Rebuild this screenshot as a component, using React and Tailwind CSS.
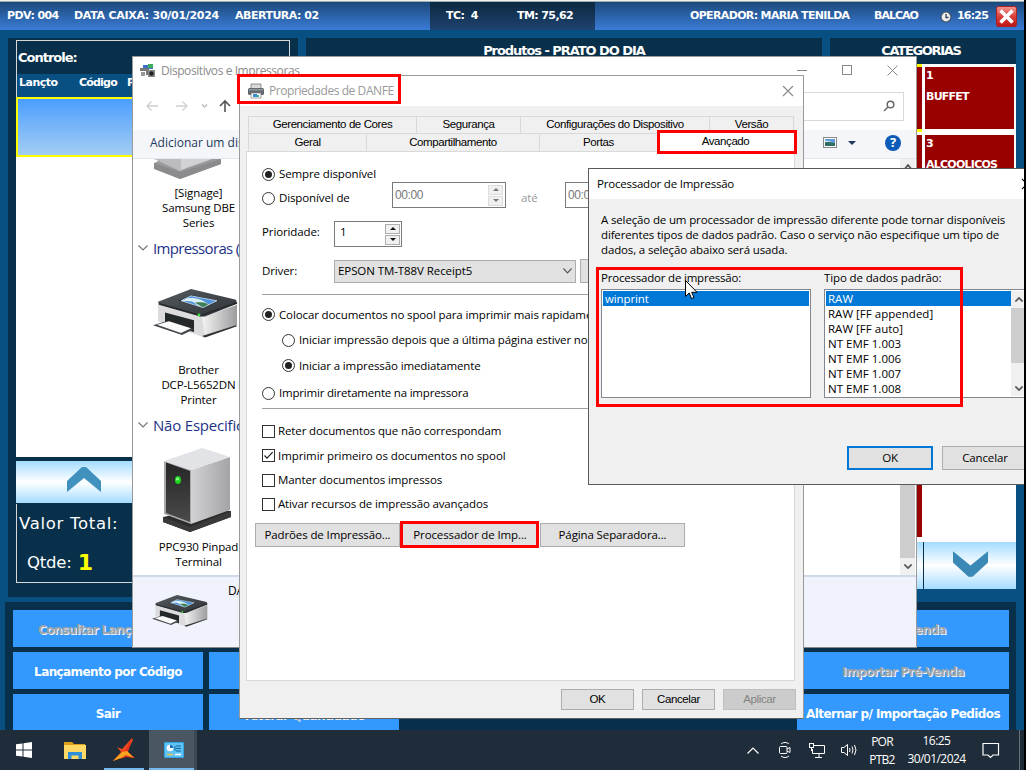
import React from "react";

const SEGOE = "font-['Open_Sans','Noto_Sans',sans-serif] text-[11.5px] tracking-[-0.12px]";
const ARIAL = "font-['Liberation_Sans',Arial,sans-serif] text-[11.5px] tracking-[-0.4px]";

function Radio({ on }) {
  return (
    <svg className="mr-1 h-[13px] w-[13px] shrink-0" viewBox="0 0 13 13">
      <circle cx="6.5" cy="6.5" r="6" fill="#fff" stroke="#333" />
      {on && <circle cx="6.5" cy="6.5" r="3.5" fill="#222" />}
    </svg>
  );
}

function Check({ on }) {
  return (
    <svg className="mr-[3px] h-[13px] w-[13px] shrink-0" viewBox="0 0 13 13">
      <rect x=".5" y=".5" width="12" height="12" fill="#fff" stroke="#333" />
      {on && <path d="M2.5 6.5 5 9.2 10.7 3.2" fill="none" stroke="#222" strokeWidth="1.2" />}
    </svg>
  );
}

function Row({ h, children, indent }) {
  return <div className={`flex shrink-0 items-center ${h} ${indent ? "pl-5" : ""}`}>{children}</div>;
}

function Close({ className, color = "#888" }) {
  return (
    <svg className={className} viewBox="0 0 12 12">
      <path d="M1 1 11 11M11 1 1 11" stroke={color} strokeWidth="1.1" />
    </svg>
  );
}

function Printer({ className }) {
  return (
    <svg className={className} viewBox="0 0 85 50" preserveAspectRatio="none">
      <defs>
        <linearGradient id="pb" x1="0" x2="1"><stop offset="0" stopColor="#f4f4f4" /><stop offset="1" stopColor="#9c9c9f" /></linearGradient>
        <linearGradient id="pt" x1="0" y1="0" x2="1" y2="1"><stop offset="0" stopColor="#555b60" /><stop offset="1" stopColor="#2f3337" /></linearGradient>
      </defs>
      <path d="M5 15 52 27 52 49 47 48 5 33Z" fill="#dcdcdf" />
      <path d="M49 29 84 16 84 37 52 49Z" fill="url(#pb)" />
      <path d="M49 48 83 37 84 38 52 49.500Z" fill="#333" />
      <path d="M5 13 38 0 83 11 84 15 52 28 47 28 6 16Z" fill="url(#pt)" />
      <path d="M6 15 48 27 84 14" fill="none" stroke="#26292c" strokeWidth="1.5" />
      <path d="M25 12 39 6 66 12 50 20Z" fill="#2b2f33" />
      <path d="M28 12 38 7 64 12 50 19Z" fill="#4f93dc" stroke="#cfe1f2" strokeWidth=".8" />
      <path d="M34 9.500C42 8 50 11 56 16L50 18.500 44 16.500C40 12 36 12 31 12.500L29 12Z" fill="#d9eef0" />
      <path d="M42 14C48 13 54 14 55 16L50 18.500Z" fill="#3f7d56" />
      <path d="M12 24 41 32 41 44 12 36Z" fill="#25282b" />
      <path d="M0 37 13 33 41 41 29 47Z" fill="#43484d" />
      <path d="M4 36.500 16 33 38 40 28 45Z" fill="#fafafa" />
      <circle cx="46" cy="26.500" r="1.400" fill="#35e835" />
    </svg>
  );
}

function Tower({ className }) {
  return (
    <svg className={className} viewBox="0 0 70 86">
      <defs>
        <linearGradient id="tf" x1="0" y1="0" x2="0" y2="1"><stop offset="0" stopColor="#262626" /><stop offset="1" stopColor="#4a4a4a" /></linearGradient>
        <linearGradient id="ts" x1="0" y1="0" x2="1" y2="0"><stop offset="0" stopColor="#d2d2d4" /><stop offset="1" stopColor="#a4a4a8" /></linearGradient>
      </defs>
      <path d="M1 70 1 75 28 85 69 70 69 64 40 62Z" fill="#2b2b2b" />
      <path d="M1 70 28 80 69 64 69 70 28 85 1 75Z" fill="#3a3a3a" />
      <path d="M2 14 29 23 29 77 2 67Z" fill="#a8a8aa" />
      <path d="M4 15.500 28 24 28 75 4 66Z" fill="url(#tf)" />
      <path d="M29 23 68 10 68 63 29 77Z" fill="url(#ts)" />
      <path d="M2 14 40 1 68 10 29 23Z" fill="#e2e3e7" />
      <ellipse cx="16" cy="33" rx="3" ry="4" fill="#1fd41f" />
      <circle cx="15.500" cy="32" r="1.500" fill="#8aff8a" />
    </svg>
  );
}

function Chevron({ className, d, color = "#777", w = 1.2 }) {
  return (
    <svg className={className} viewBox="0 0 10 6" preserveAspectRatio="none">
      <path d={d === "up" ? "M.5 5.500 5 1 9.500 5.500" : "M.5 .5 5 5 9.500 .5"} fill="none" stroke={color} strokeWidth={w} />
    </svg>
  );
}

function Spinner({ off }) {
  const c = off ? "#777" : "#111";
  return (
    <div className="flex w-[15px] flex-col gap-px">
      {["M3 0 6 3H0Z", "M0 0H6L3 3Z"].map((d) => (
        <div key={d} className={`flex h-[10px] items-center justify-center border bg-[#f0f0f0] ${off ? "border-[#dcdcdc]" : "border-[#adadad]"}`}>
          <svg className="h-[3px] w-[6px]" viewBox="0 0 6 3"><path d={d} fill={c} /></svg>
        </div>
      ))}
    </div>
  );
}

function WinButton({ children, className = "" }) {
  return <button className={`flex shrink-0 items-center justify-center border border-[#adadad] bg-[#e1e1e1] ${className}`}>{children}</button>;
}

function AppButton({ children, disabled, className = "" }) {
  return (
    <div className={`flex h-full items-center justify-center whitespace-nowrap bg-[#3399ff] pt-[3px] text-[12px] ${disabled ? "text-[#a0a4a8] [text-shadow:1px_1px_0_#f4f4f4]" : "text-white"} ${className}`}>{children}</div>
  );
}

function PosApp() {
  return (
    <div className="flex h-[730px] flex-col bg-[#085082] font-['DejaVu_Sans',Verdana,sans-serif] font-bold text-white">
      <div className="h-[2px] shrink-0 border-b border-[#9ab0b8] bg-[#f4f1e8]" />
      <header className="flex h-7 shrink-0 items-center whitespace-nowrap bg-gradient-to-b from-[#1d4a7c] to-[#3b7cd8] pt-px text-[11px] tracking-[-0.35px]">
        <span className="w-[67px] pl-[7px] tracking-[-0.6px]">PDV: 004</span>
        <span className="w-[161px] pl-[7px] tracking-[-0.28px]">DATA CAIXA: 30/01/2024</span>
        <span className="w-[202px] pl-[7px] tracking-[-0.5px]">ABERTURA: 02</span>
        <div className="-mt-px flex h-7 w-[165px] items-center bg-gradient-to-b from-[#0d2940] to-[#1e4370] pt-px">
          <span className="w-[87px] whitespace-pre pl-4 tracking-[-0.6px]">TC:  4</span>
          <span className="tracking-[-0.6px]">TM: 75,62</span>
        </div>
        <span className="ml-[95px] w-[184px] tracking-[-0.65px]">OPERADOR: MARIA TENILDA</span>
        <span className="w-[66px] tracking-[-1px]">BALCAO</span>
        <svg className="h-3 w-3" viewBox="0 0 12 12"><circle cx="6" cy="6" r="5" fill="#eee" stroke="#456" strokeWidth="1.200" /><path d="M6 3V6.500H8.500" fill="none" stroke="#345" strokeWidth="1.300" /></svg>
        <span className="ml-[5px] w-[34px] tracking-[-0.8px]">16:25</span>
        <svg className="ml-[5px] h-[21px] w-[21px]" viewBox="0 0 21 21">
          <defs><linearGradient id="cx" x1="0" y1="0" x2="0" y2="1"><stop offset="0" stopColor="#f59a92" /><stop offset=".5" stopColor="#d8403a" /><stop offset="1" stopColor="#c01414" /></linearGradient></defs>
          <rect x=".5" y=".5" width="20" height="20" rx="2" fill="url(#cx)" stroke="#b02020" />
          <path d="M4.500 4.500 16.500 16.500M16.500 4.500 4.500 16.500" stroke="#fff" strokeWidth="3.600" />
        </svg>
      </header>

      <div className="mt-2 flex h-[559px] shrink-0 gap-2 pl-2">
        <section className="flex w-[290px] flex-col bg-[#08304a] px-2 pt-[2px]">
          <div className="flex h-[57px] shrink-0 flex-col border-x border-t border-[#d8d8d8]">
            <div className="flex h-[33px] items-center pl-[1px] text-[13px] tracking-[-1px]">Controle:</div>
            <div className="flex flex-1 items-start bg-[#085082] pl-[2px] pt-[1px] text-[11px] tracking-[-0.5px]">
              <span className="w-[60px]">Lançto</span><span className="w-[48px] tracking-[-0.8px]">Código</span><span>Produto</span>
            </div>
          </div>
          <div className="h-[360px] shrink-0 bg-white">
            <div className="h-[60px] border-2 border-[#ffff00] bg-gradient-to-b from-[#4a9dff] to-[#a3cdf2]" />
          </div>
          <div className="mt-1 flex h-[42px] shrink-0 bg-gradient-to-b from-[#a3dcff] via-white to-[#a3dcff] pl-[51px] pt-[6px]">
            <svg className="h-[25px] w-[34px]" viewBox="0 0 34 25"><path d="M0 14 15 0H19L34 14V25L17 11 0 25Z" fill="#4191bf" /></svg>
          </div>
          <div className="mt-px flex h-[79px] flex-col border-x border-b border-[#d8d8d8] text-[16.5px] font-normal">
            <div className="flex h-[40px] items-center pl-[2px] tracking-[0.7px]">Valor Total:</div>
            <div className="flex h-[38px] items-center pl-[10px] tracking-[-0.2px]">Qtde:<b className="ml-[6px] text-[22px] leading-none text-[#ffff00]">1</b></div>
          </div>
        </section>
        <section className="w-[516px] bg-[#08304a] pt-1 text-center text-[13px] leading-[18px] tracking-[-1.05px]">Produtos - PRATO DO DIA</section>
        <section className="flex w-[186px] flex-col bg-[#08304a]">
          <div className="h-[26px] shrink-0 pr-1 pt-1 text-center text-[13px] leading-[18px] tracking-[-1.3px]">CATEGORIAS</div>
          <div className="flex h-[478px] shrink-0 bg-white">
            <div className="flex w-[92px] shrink-0 flex-col gap-[3px]">
              <div className="h-[68px] border-y-[3px] border-[#ffff00] bg-[#990000]" />
              <div className="h-[402px] bg-[#990000]" />
            </div>
            <div className="ml-[3px] flex w-[89px] flex-col gap-[6px] pt-[3px] text-[11px] leading-[14px] tracking-[-0.75px]">
              <div className="h-[62px] bg-[#990000] pl-px pt-[2px]">1<div className="mt-[7px]">BUFFET</div></div>
              <div className="h-[62px] bg-[#990000] pl-px pt-[2px]">3<div className="mt-[7px]">ALCOOLICOS</div></div>
            </div>
          </div>
          <div className="flex h-[47px] shrink-0">
            <div className="w-[93px] bg-gradient-to-b from-[#a3dcff] via-white to-[#a3dcff]" />
            <div className="ml-px flex flex-1 bg-gradient-to-b from-[#a3dcff] via-white to-[#a3dcff] pl-[29px] pt-[9px]">
              <svg className="h-[26px] w-[35px]" viewBox="0 0 34 25"><path d="M0 0 17 14 34 0V11L19 25H15L0 11Z" fill="#3a88b5" /></svg>
            </div>
          </div>
          <div className="flex-1 bg-[#085082]" />
        </section>
      </div>

      <div className="ml-[5px] mt-[5px] grid h-[128px] w-[1011px] grid-cols-[190px_190px_386px_212px] grid-rows-[37px_37px_36px] gap-x-[6px] gap-y-[5px] bg-[#08304a] pl-2 pt-2 tracking-[-0.6px]">
        <AppButton disabled>Consultar Lançamento</AppButton>
        <AppButton /><div /><AppButton disabled className="pr-[10px]">Finalizar Venda</AppButton>
        <AppButton>Lançamento por Código</AppButton>
        <AppButton /><div /><AppButton disabled>Importar Pré-Venda</AppButton>
        <AppButton>Sair</AppButton>
        <AppButton disabled className="pt-[5px]">Alterar Quantidade</AppButton><div /><AppButton>Alternar p/ Importação Pedidos</AppButton>
      </div>
    </div>
  );
}

function DeviceText({ lines }) {
  return <div className="text-center leading-[15px] text-black">{lines.map((l) => <div key={l}>{l}</div>)}</div>;
}

function Group({ children, className = "" }) {
  return (
    <div className={`flex h-5 shrink-0 items-center whitespace-nowrap text-[15px] text-[#1e3287] ${className}`}>
      <Chevron className="ml-[5px] mr-[5px] h-[6px] w-[10px] shrink-0" />{children}
    </div>
  );
}

function DevicesWindow() {
  return (
    <section className={`absolute left-[132px] top-[56px] flex h-[592px] w-[785px] flex-col border-l border-r border-t border-[#9a9a9a] bg-white ${SEGOE}`}>
      <div className="flex h-[30px] shrink-0 items-center pb-[3px] text-[#8b8b8b]">
        <svg className="ml-[7px] h-[14px] w-[16px]" viewBox="0 0 16 14">
          <path d="M3 1H13V5H3Z" fill="#3a6fd0" /><path d="M8 0H13V4H8Z" fill="#3cae5a" />
          <path d="M0 4H9V11H6V7H0Z" fill="#777" /><path d="M1 8H5V12H1Z" fill="#999" />
          <rect x="8" y="6" width="7" height="7" fill="#888" /><circle cx="11.500" cy="9.500" r="2.200" fill="#222" />
        </svg>
        <span className="ml-[5px] text-[12px] tracking-[-0.42px]">Dispositivos e Impressoras</span>
        <svg className="ml-auto mr-[18px] h-[11px] w-[101px]" viewBox="0 0 101 11" fill="none" stroke="#888"><path d="M0 5.500H10" /><rect x="45.500" y=".5" width="9" height="9" /><path d="M90.500 .5 100.500 10.500M100.500 .5 90.500 10.500" /></svg>
      </div>
      <div className="flex h-[43px] shrink-0 items-center pb-[5px]">
        <svg className="ml-3 h-[14px] w-[90px]" viewBox="0 0 90 14" fill="none" strokeWidth="1.300">
          <path d="M13 7H2M6.500 2.500 2 7 6.500 11.500M31 7H42M37.500 2.500 42 7 37.500 11.500" stroke="#cfcfcf" />
          <path d="M57 5.500 59.500 8 62 5.500" stroke="#bbb" /><path d="M80 13V2M75 7 80 2 85 7" stroke="#555" strokeWidth="1.600" />
        </svg>
        <div className="ml-[6px] mr-3 flex h-[29px] flex-1 items-center justify-end border border-[#d9d9d9] pr-2">
          <svg className="h-3 w-3" viewBox="0 0 12 12" fill="none" stroke="#666" strokeWidth="1.500"><circle cx="7.500" cy="4.500" r="3.300" /><path d="M5 7 1 11" /></svg>
        </div>
      </div>
      <div className="flex h-[29px] shrink-0 items-center border-b border-[#e5e8ee] bg-[#f4f6fa] pb-[3px] text-[#1e395b]">
        <span className="ml-[17px] text-[12px] tracking-[0px]">Adicionar um dispositivo</span>
        <svg className="ml-auto h-[11px] w-[14px]" viewBox="0 0 14 11"><rect x=".5" y=".5" width="13" height="10" fill="#fff" stroke="#8a8a8a" /><rect x="2" y="2" width="10" height="7" fill="#5b9bd8" /><path d="M2 5C6 4 9 6 12 6V9H2Z" fill="#2f6e62" /><path d="M2 3.500 9 5H2Z" fill="#e4f2fb" /></svg>
        <svg className="ml-[11px] h-1 w-2" viewBox="0 0 8 4"><path d="M0 0H8L4 4Z" fill="#1e395b" /></svg>
        <div className="ml-[29px] mr-[15px] flex h-4 w-4 items-center justify-center rounded-full bg-[#0b5cb8] text-[13px] font-bold text-white">?</div>
      </div>
      <div className="flex h-[416px] shrink-0 overflow-hidden">
        <div className="flex w-[130px] shrink-0 flex-col">
          <svg className="ml-[20px] h-[20px] w-[70px] shrink-0" viewBox="0 0 70 20">
            <path d="M1 4V9L27 20 68 5V0H10Z" fill="#9a9a9d" /><path d="M1 10 27 20 68 5V0L27 13 1 4Z" fill="#8b8b8e" /><path d="M1 0 27 12 50 0Z" fill="#bcbcbe" /><path d="M28 0H59L28 11Z" fill="#d2d2d4" />
          </svg>
          <div className="mt-[6px] w-[131px]"><DeviceText lines={["[Signage]", "Samsung DBE", "Series"]} /></div>
          <div className="h-[8px] shrink-0" />
          <Group className="tracking-[-0.65px]">Impressoras (3)</Group>
          <Printer className="ml-[20px] mt-[31px] h-[49px] w-[85px] shrink-0" />
          <div className="mt-[24px] w-[131px]"><DeviceText lines={["Brother", "DCP-L5652DN", "Printer"]} /></div>
          <div className="h-[8px] shrink-0" />
          <Group className="tracking-[-0.2px]">Não Especificado</Group>
          <Tower className="ml-[29px] mt-3 h-[86px] w-[70px] shrink-0" />
          <div className="mt-[6px] w-[131px]"><DeviceText lines={["PPC930 Pinpad", "Terminal"]} /></div>
        </div>
        <div className="ml-auto mr-[1px] flex w-[15px] flex-col items-center bg-[#f0f0f0]">
          <Chevron d="up" className="my-[5px] h-[6px] w-[8px] shrink-0" color="#555" w={2} />
          <div className="w-full flex-1 bg-[#cdcdcd]" />
          <Chevron className="my-[6px] h-[5px] w-[8px] shrink-0" color="#555" w={2} />
        </div>
      </div>
      <div className="flex flex-1 border-b border-t-2 border-b-[#888] border-t-[#cfd9ea] bg-[#f0f3fc]">
        <Printer className="ml-[19px] mt-[18px] h-[32px] w-[56px]" />
        <span className="ml-[20px] mt-[5px] text-[12px] text-black">DANFE</span>
      </div>
    </section>
  );
}

const TABS1 = [["Gerenciamento de Cores", "w-[168px]"], ["Segurança", "w-[104px]"], ["Configurações do Dispositivo", "w-[189px]"], ["Versão", "w-[85px]"]];
const TABS2 = [["Geral", "w-[118px]"], ["Compartilhamento", "w-[173px]"], ["Portas", "w-[118px]"]];

function PropertiesWindow() {
  return (
    <section className={`absolute left-[239px] top-[75px] flex h-[644px] w-[565px] flex-col overflow-hidden whitespace-nowrap border border-[#9a9a9a] border-b-[#606060] bg-[#f0f0f0] text-black ${SEGOE}`}>
      <div className="flex h-[30px] shrink-0 items-center bg-white text-[#999]">
        <svg className="ml-2 h-4 w-4" viewBox="0 0 16 16"><path d="M3 1H13V6H3Z" fill="#d8dadc" stroke="#777" strokeWidth=".8" /><rect x="0" y="5" width="16" height="7" rx="1.500" fill="#63686d" /><path d="M1 6H15V7.500H1Z" fill="#8f9498" /><path d="M3 10H13V15H3Z" fill="#fff" stroke="#777" strokeWidth=".7" /><path d="M5 11H9V14H5Z" fill="#3b8fd0" /><path d="M9 12H11V14H9Z" fill="#3fb58a" /></svg>
        <span className="ml-[5px] text-[12px] tracking-[-0.43px]">Propriedades de DANFE</span>
        <Close className="ml-auto mr-[9px] h-3 w-3" />
      </div>
      <div className={`ml-[8px] mt-[9px] flex h-[18px] shrink-0 pt-px ${ARIAL}`}>
        {TABS1.map(([t, w]) => <div key={t} className={`flex shrink-0 items-center justify-center border-l border-t border-[#d9d9d9] last:border-r ${w}`}>{t}</div>)}
      </div>
      <div className={`ml-[8px] flex h-[18px] shrink-0 ${ARIAL}`}>
        {TABS2.map(([t, w]) => <div key={t} className={`flex shrink-0 items-center justify-center border-l border-t border-[#d9d9d9] pt-px ${w}`}>{t}</div>)}
        <div className="-mt-px flex w-[137px] items-center justify-center bg-white">Avançado</div>
      </div>
      <div className="ml-[6px] flex h-[530px] w-[549px] shrink-0 flex-col border border-[#d9d9d9] bg-white pl-[15px] pt-[10px]">
        <Row h="h-[24px]"><Radio on />Sempre disponível</Row>
        <Row h="h-[24px]"><Radio /><span className="w-[113px]">Disponível de</span>
          <div className="-mt-[6px] flex h-[26px] w-[114px] items-center justify-between border border-[#7a7a7a] pl-[2px] pr-[2px] text-[#777]"><span className={`${ARIAL} text-[12px]`}>00:00</span><Spinner off /></div>
          <span className="ml-[15px] w-[44px] text-[#999]">até</span>
          <div className="-mt-[6px] flex h-[26px] w-[114px] items-center border border-[#7a7a7a] pl-[2px] text-[#777]"><span className={`${ARIAL} text-[12px]`}>00:00</span></div>
        </Row>
        <Row h="h-[44px]"><span className="w-[72px]">Prioridade:</span>
          <div className="mt-[4px] flex h-[26px] w-[68px] items-center justify-between border border-[#7a7a7a] pl-[5px] pr-px"><span className="-mt-[5px]">1</span><Spinner /></div>
        </Row>
        <Row h="h-[34px]"><span className="w-[72px]">Driver:</span>
          <div className="flex h-[23px] w-[242px] items-center justify-between border border-[#adadad] bg-[#e1e1e1] pl-[3px] pr-[3px] tracking-[-0.08px]">EPSON TM-T88V Receipt5<Chevron className="h-[6px] w-[9px]" color="#555" /></div>
          <WinButton className="ml-1 h-[24px] w-[100px]" />
        </Row>
        <div className="mt-[6px] h-px w-[520px] shrink-0 bg-[#a0a0a0]" />
        <div className="h-[7px] shrink-0" />
        <Row h="h-[25px]"><Radio on />Colocar documentos no spool para imprimir mais rapidamente</Row>
        <Row h="h-[26px]" indent><Radio />Iniciar impressão depois que a última página estiver no spool</Row>
        <Row h="h-[25px]" indent><Radio on />Iniciar a impressão imediatamente</Row>
        <Row h="h-[30px]"><Radio /><span className="tracking-[-0.2px]">Imprimir diretamente na impressora</span></Row>
        <div className="h-px w-[520px] shrink-0 bg-[#a0a0a0]" />
        <div className="h-[10px] shrink-0" />
        <Row h="h-[24px]"><Check />Reter documentos que não correspondam</Row>
        <Row h="h-[25px]"><Check on /><span className="tracking-[-0.08px]">Imprimir primeiro os documentos no spool</span></Row>
        <Row h="h-[24px]"><Check />Manter documentos impressos</Row>
        <Row h="h-[24px]"><Check /><span className="tracking-[-0.15px]">Ativar recursos de impressão avançados</span></Row>
        <div className="-ml-[7px] mt-[7px] flex gap-[1px]">
          <WinButton className="h-6 w-[145px]">Padrões de Impressão...</WinButton>
          <WinButton className="h-6 w-[138px]">Processador de Imp...</WinButton>
          <WinButton className="h-6 w-[145px]">Página Separadora...</WinButton>
        </div>
      </div>
      <div className={`mt-[8px] flex justify-end gap-2 pr-[7px] ${ARIAL}`}>
        <WinButton className="h-[21px] w-[73px]">OK</WinButton>
        <WinButton className="h-[21px] w-[73px]">Cancelar</WinButton>
        <WinButton className="h-[21px] w-[73px] border-[#bfbfbf] !bg-[#cccccc] text-[#838383]">Aplicar</WinButton>
      </div>
    </section>
  );
}

const TYPES = ["RAW", "RAW [FF appended]", "RAW [FF auto]", "NT EMF 1.003", "NT EMF 1.006", "NT EMF 1.007", "NT EMF 1.008"];

function ProcessorDialog() {
  return (
    <section className={`absolute left-[588px] top-[168px] flex h-[317px] w-[450px] flex-col whitespace-nowrap border border-[#5a5a5a] bg-[#f0f0f0] text-black ${SEGOE}`}>
      <div className="flex h-[30px] shrink-0 items-center bg-white pl-2"><span className="tracking-[-0.22px]">Processador de Impressão</span><Close className="ml-auto mr-[4px] h-3 w-3" color="#111" /></div>
      <div className="mt-[13px] pl-3 leading-[15px] tracking-[-0.145px]">
        <div>A seleção de um processador de impressão diferente pode tornar disponíveis</div>
        <div>diferentes tipos de dados padrão. Caso o serviço não especifique um tipo de</div>
        <div>dados, a seleção abaixo será usada.</div>
      </div>
      <div className="mt-[13px] flex gap-[13px] pl-3">
        <div className="w-[210px]">
          <div className="mb-[4px] leading-[15px] tracking-[-0.2px]">Processador de impressão:</div>
          <div className="h-[109px] border border-[#828790] bg-white p-px leading-[15px]"><div className="bg-[#0078d7] pl-[2px] text-white">winprint</div></div>
        </div>
        <div className="w-[204px]">
          <div className="mb-[4px] leading-[15px]">Tipo de dados padrão:</div>
          <div className="flex h-[109px] border border-[#828790] bg-white p-px leading-[15px]">
            <div className="w-[185px] shrink-0">{TYPES.map((t, i) => <div key={t} className={`pl-[2px] tracking-[0.02px] ${i ? "" : "bg-[#0078d7] text-white"}`}>{t}</div>)}</div>
            <div className="flex w-[16px] flex-col items-center bg-[#f0f0f0]">
              <Chevron d="up" className="my-[6px] h-[5px] w-[8px] shrink-0" color="#555" w={2} />
              <div className="h-[55px] w-full bg-[#cdcdcd]" />
              <Chevron className="mb-[5px] mt-auto h-[5px] w-[8px] shrink-0" color="#555" w={2} />
            </div>
          </div>
        </div>
      </div>
      <div className="mt-[48px] flex gap-[9px] pl-[258px]">
        <WinButton className="h-6 w-[86px] border-2 !border-[#0078d7]">OK</WinButton>
        <WinButton className="h-6 w-[86px]">Cancelar</WinButton>
      </div>
    </section>
  );
}

function Taskbar() {
  return (
    <footer className="flex h-10 items-center bg-[#1f2c39] font-['Open_Sans','Noto_Sans',sans-serif] text-[12px] leading-[18px] tracking-[-0.75px] text-white">
      <svg className="ml-4 h-4 w-4" viewBox="0 0 16 16" fill="#fff"><path d="M0 2.300 6.500 1.400V7.500H0ZM7.500 1.200 16 0V7.500H7.500ZM0 8.500H6.500V14.600L0 13.700ZM7.500 8.500H16V16L7.500 14.800Z" /></svg>
      <svg className="ml-8 h-[19px] w-[22px]" viewBox="0 0 22 19"><path d="M0 1H8L10 3H21V18H0Z" fill="#dda01c" /><path d="M0 4H22V18H0Z" fill="#ffd966" /><path d="M4 18V11H18V18H14.500V14.500H7.500V18Z" fill="#2e8fd8" /></svg>
      <div className="ml-[18px] flex h-full w-10 flex-col items-center border-b-2 border-[#76b9ed] pt-2">
        <svg className="h-[23px] w-[22px]" viewBox="0 0 22 23"><path d="M19 0 9 11 4 9 8 14 0 23 12 18 20 2Z" fill="#f0481e" /><path d="M19 0 15 14 22 20 13 19 7 21 12 13Z" fill="#e8321c" /><path d="M9 14 0 23 8 20 13 17 21 20 14 13Z" fill="#fca51f" /></svg>
      </div>
      <div className="ml-[5px] flex h-full w-[45px] flex-col items-center border-b-2 border-[#76b9ed] bg-[#4a5661] pl-1 pt-3">
        <svg className="h-4 w-5" viewBox="0 0 20 16"><rect width="20" height="16" rx="1" fill="#35a5e0" /><rect x="1" y="1" width="18" height="14" fill="#5ec4f5" /><circle cx="6" cy="6" r="3.300" fill="#fff" /><path d="M6 6V2.700A3.300 3.300 0 0 1 9.300 6Z" fill="#1970b8" /><path d="M12 4H17M12 6.500H17M12 9H17M11 4V9" stroke="#12609c" /><path d="M3 12.500H9" stroke="#f3c24c" strokeWidth="1.500" /><path d="M11 12.500H17" stroke="#fff" strokeWidth="1.500" /></svg>
      </div>
      <div className="h-full w-[3px] bg-[#3d4954]" />
      <svg className="ml-[550px] h-[7px] w-3" viewBox="0 0 12 7" fill="none" stroke="#fff" strokeWidth="1.200"><path d="M.5 6.500 6 1 11.500 6.500" /></svg>
      <svg className="ml-[20px] h-4 w-3" viewBox="0 0 12 16" fill="none" stroke="#fff"><rect x=".5" y="4.500" width="7.500" height="7" rx="1" /><path d="M8 7 11 5.500V10.500L8 9M2 2C4 0 8 0 10 2M2 14C4 16 8 16 10 14" /></svg>
      <svg className="ml-[18px] h-[15px] w-4" viewBox="0 0 16 15" fill="none" stroke="#fff"><path d="M5 2.500H15.500V10.500H3.500V6M10 10.500V14M6 14.500H13" /><rect x=".5" y=".5" width="4" height="4" /><path d="M2.500 5V8" /></svg>
      <svg className="ml-4 h-[14px] w-[17px]" viewBox="0 0 17 14" fill="none" stroke="#fff"><path d="M.5 4.500H3L6.500 1.500V12.500L3 9.500H.5ZM8.500 5Q9.500 7 8.500 9M11 3.500Q13 7 11 10.500M13.500 2Q16.500 7 13.500 12" /></svg>
      <div className="ml-[10px] w-[28px] pt-px text-center">POR<br />PTB2</div>
      <div className="ml-[9px] w-[63px] text-center tracking-[-0.55px]">16:25<br />30/01/2024</div>
      <svg className="ml-[14px] h-[17px] w-[18px]" viewBox="0 0 18 17" fill="none" stroke="#fff" strokeWidth="1.200"><path d="M1 1.500H16.500V13H11L8.500 15.500 6 13H1Z" /></svg>
      <div className="ml-auto mr-[4px] h-full w-px bg-[#66717b]" />
    </footer>
  );
}

export default function App() {
  return (
    <main className="relative flex h-[770px] w-[1026px] overflow-hidden bg-black">
      <div className="relative h-full w-[1024px] shrink-0 overflow-hidden">
        <PosApp />
        <Taskbar />
        <DevicesWindow />
        <PropertiesWindow />
        <ProcessorDialog />
        <div className="absolute left-[237px] top-[74px] h-[30px] w-[164px] border-[3px] border-[#ff0000]" />
        <div className="absolute left-[657px] top-[130px] h-[24px] w-[140px] border-[3px] border-[#ff0000]" />
        <div className="absolute left-[596px] top-[267px] h-[140px] w-[367px] border-[3px] border-[#ff0000]" />
        <div className="absolute left-[400px] top-[521px] h-[27px] w-[139px] border-[3px] border-[#ff0000]" />
        <svg className="absolute left-[685px] top-[280px] h-[20px] w-[13px]" viewBox="0 0 13 20"><path d="M.5 .5V16.500L4.200 13 6.500 18.500 9 17.500 6.700 12.300H12Z" fill="#fff" stroke="#000" /></svg>
      </div>
    </main>
  );
}
